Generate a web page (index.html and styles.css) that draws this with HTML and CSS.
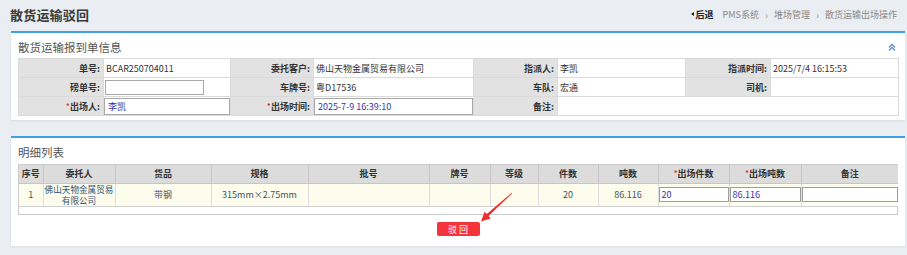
FILE: index.html
```html
<!DOCTYPE html>
<html lang="zh-CN">
<head>
<meta charset="utf-8">
<title>散货运输驳回</title>
<link rel="stylesheet" href="styles.css">
</head>
<body>
<div class="topbar">
  <div class="page-title">散货运输驳回</div>
  <div class="crumbs">
    <span class="back">后退</span>
    <span>PMS系统</span><span class="sep">›</span>
    <span>堆场管理</span><span class="sep">›</span>
    <span>散货运输出场操作</span>
  </div>
</div>

<div class="panel">
  <div class="panel-head">
    <span>散货运输报到单信息</span>
    <svg class="collapse" width="8" height="8" viewBox="0 0 8 8"><path d="M1 4.5 L4 1.5 L7 4.5 M1 7.5 L4 4.5 L7 7.5" fill="none" stroke="#5b8fd0" stroke-width="1.3"/></svg>
  </div>
  <table class="form">
    <colgroup>
      <col class="c85"><col class="c127"><col class="c83"><col class="c160"><col class="c84"><col class="c128"><col class="c85"><col class="c128">
    </colgroup>
    <tr>
      <td class="lbl">单号:</td><td>BCAR250704011</td>
      <td class="lbl">委托客户:</td><td>佛山天物金属贸易有限公司</td>
      <td class="lbl">指派人:</td><td>李凯</td>
      <td class="lbl">指派时间:</td><td>2025/7/4 16:15:53</td>
    </tr>
    <tr>
      <td class="lbl">磅单号:</td><td class="icell"><div class="inp short"></div></td>
      <td class="lbl">车牌号:</td><td>粤D17536</td>
      <td class="lbl">车队:</td><td>宏通</td>
      <td class="lbl">司机:</td><td></td>
    </tr>
    <tr>
      <td class="lbl"><span class="req">*</span>出场人:</td><td class="icell"><div class="inp">李凯</div></td>
      <td class="lbl"><span class="req">*</span>出场时间:</td><td class="icell"><div class="inp">2025-7-9 16:39:10</div></td>
      <td class="lbl">备注:</td><td colspan="3"></td>
    </tr>
  </table>
</div>

<div class="panel panel2">
  <div class="panel-head head2">
    <span>明细列表</span>
  </div>
  <div class="grid-wrap">
    <table class="grid">
      <colgroup>
        <col class="g24"><col class="g72"><col class="g96"><col class="g97"><col class="g121"><col class="g61"><col class="g48"><col class="g60"><col class="g60"><col class="g71"><col class="g72"><col class="g97">
      </colgroup>
      <tr>
        <th>序号</th><th>委托人</th><th>货品</th><th>规格</th><th>批号</th><th>牌号</th><th>等级</th><th>件数</th><th>吨数</th><th><span class="req">*</span>出场件数</th><th><span class="req">*</span>出场吨数</th><th>备注</th>
      </tr>
      <tr>
        <td>1</td><td class="client">佛山天物金属贸易有限公司</td><td>带钢</td><td>315mm×2.75mm</td><td></td><td></td><td></td><td>20</td><td>86.116</td>
        <td class="icell"><div class="ginp">20</div></td>
        <td class="icell"><div class="ginp">86.116</div></td>
        <td class="icell"><div class="ginp"></div></td>
      </tr>
    </table>
  </div>
  <div class="btn-row"><span class="btn">驳 回</span></div>
</div>

<svg class="arrow" width="907" height="255" viewBox="0 0 907 255">
  <polygon points="512.3,193.3 488.6,216.0 490.6,218.4 481,221.5 484.6,211.8 486.8,214.0 511.7,192.7" fill="#ec2f2a"/>
</svg>
</body>
</html>
```

FILE: styles.css
```css
* { box-sizing: border-box; }
html, body { margin: 0; padding: 0; }
body {
  position: relative;
  width: 907px;
  height: 255px;
  overflow: hidden;
  background: #eaedf1;
  font-family: "Noto Sans CJK SC", "Microsoft YaHei", sans-serif;
  font-size: 9px;
  color: #333;
}

.topbar {
  height: 31px;
  display: flex;
  align-items: center;
  justify-content: space-between;
  padding: 0 10px 3px 10px;
}
.page-title {
  font-size: 13px;
  font-weight: bold;
  color: #3a3a3a;
  letter-spacing: 0.2px;
}
.crumbs {
  display: flex;
  align-items: center;
  font-size: 9px;
  color: #8a8a8a;
}
.crumbs .back {
  font-weight: bold;
  color: #222;
  margin-right: 9px;
  display: flex;
  align-items: center;
}
.crumbs .back::before {
  content: "";
  display: inline-block;
  border-style: solid;
  border-width: 2.5px 3px 2.5px 0;
  border-color: transparent #222 transparent transparent;
  margin-right: 2px;
}
.crumbs .sep {
  margin: 0 6px 0 6px;
  color: #999;
  font-size: 10px;
}

.panel {
  margin: 0 2px 0 11px;
  background: #fff;
  border-top: 2px solid #3d9fe5;
  box-shadow: 0 1px 2px rgba(0, 0, 0, 0.08);
  padding: 0 7px 4px 7px;
}
.panel2 {
  margin-top: 16px;
  padding-bottom: 0;
}
.panel-head {
  height: 25px;
  padding-top: 3px;
  display: flex;
  align-items: center;
  justify-content: space-between;
  font-size: 11.5px;
  color: #555;
}
.head2 {
  height: 26px;
  padding-top: 1px;
}
.collapse { margin-right: 2px; }

.form {
  width: 100%;
  border-collapse: collapse;
  table-layout: fixed;
  border: 1px solid #cfcfcf;
}
.form tr { height: 19px; }
.form td {
  border: 1px solid #dadada;
  padding: 0 2px;
  font-size: 9px;
  color: #333;
  white-space: nowrap;
  overflow: hidden;
}
.form td.lbl {
  background: #e2e2e2;
  text-align: right;
  font-weight: bold;
  color: #333;
  padding-right: 3px;
}
.form td.icell { padding: 0; }
.req { color: #e21d1d; font-weight: normal; }
.inp {
  height: 17px;
  width: 100%;
  border: 1px solid #a9a9a9;
  background: #fff;
  color: #3535a8;
  padding: 0 3px;
  line-height: 15px;
}
.inp.short { width: 99px; height: 15px; margin-left: 1px; }

.c85 { width: 85px; }
.c127 { width: 127px; }
.c83 { width: 83px; }
.c160 { width: 160px; }
.c84 { width: 84px; }
.c128 { width: 128px; }

.grid-wrap {
  border: 1px solid #cccccc;
  height: 51px;
  background: #fff;
}
.grid {
  width: 100%;
  border-collapse: collapse;
  table-layout: fixed;
}
.grid th {
  height: 18px;
  background: #dcdcdc;
  border-right: 1px solid #c6c6c6;
  border-bottom: 1px solid #c6c6c6;
  font-size: 9px;
  font-weight: bold;
  color: #333;
  padding: 0;
}
.grid th:last-child, .grid td:last-child { border-right: none; }
.grid td {
  height: 22px;
  background: #fdfdee;
  border-right: 1px solid #dedede;
  border-bottom: 1px solid #cfcfcf;
  text-align: center;
  color: #44525f;
  font-size: 9px;
  padding: 0;
  line-height: 10px;
}
.grid td.client {
  color: #2e5475;
  padding: 0;
  font-size: 8.6px;
  line-height: 11px;
}
.grid td.icell { padding: 0; }
.ginp {
  height: 15px;
  width: 100%;
  border: 1px solid #9d9d9d;
  background: #fff;
  color: #3535a8;
  text-align: left;
  padding: 0 2px;
  line-height: 13px;
}

.g24 { width: 24px; }
.g72 { width: 72px; }
.g96 { width: 96px; }
.g97 { width: 97px; }
.g121 { width: 121px; }
.g61 { width: 61px; }
.g48 { width: 48px; }
.g60 { width: 60px; }
.g71 { width: 71px; }

.btn-row {
  display: flex;
  justify-content: center;
  padding: 7px 0 10px 0;
}
.btn {
  width: 43px;
  height: 14px;
  background: #f4333d;
  color: #fff;
  border-radius: 2px;
  font-size: 9px;
  display: flex;
  align-items: center;
  justify-content: center;
}

.arrow {
  position: absolute;
  left: 0;
  top: 0;
  pointer-events: none;
}
```
